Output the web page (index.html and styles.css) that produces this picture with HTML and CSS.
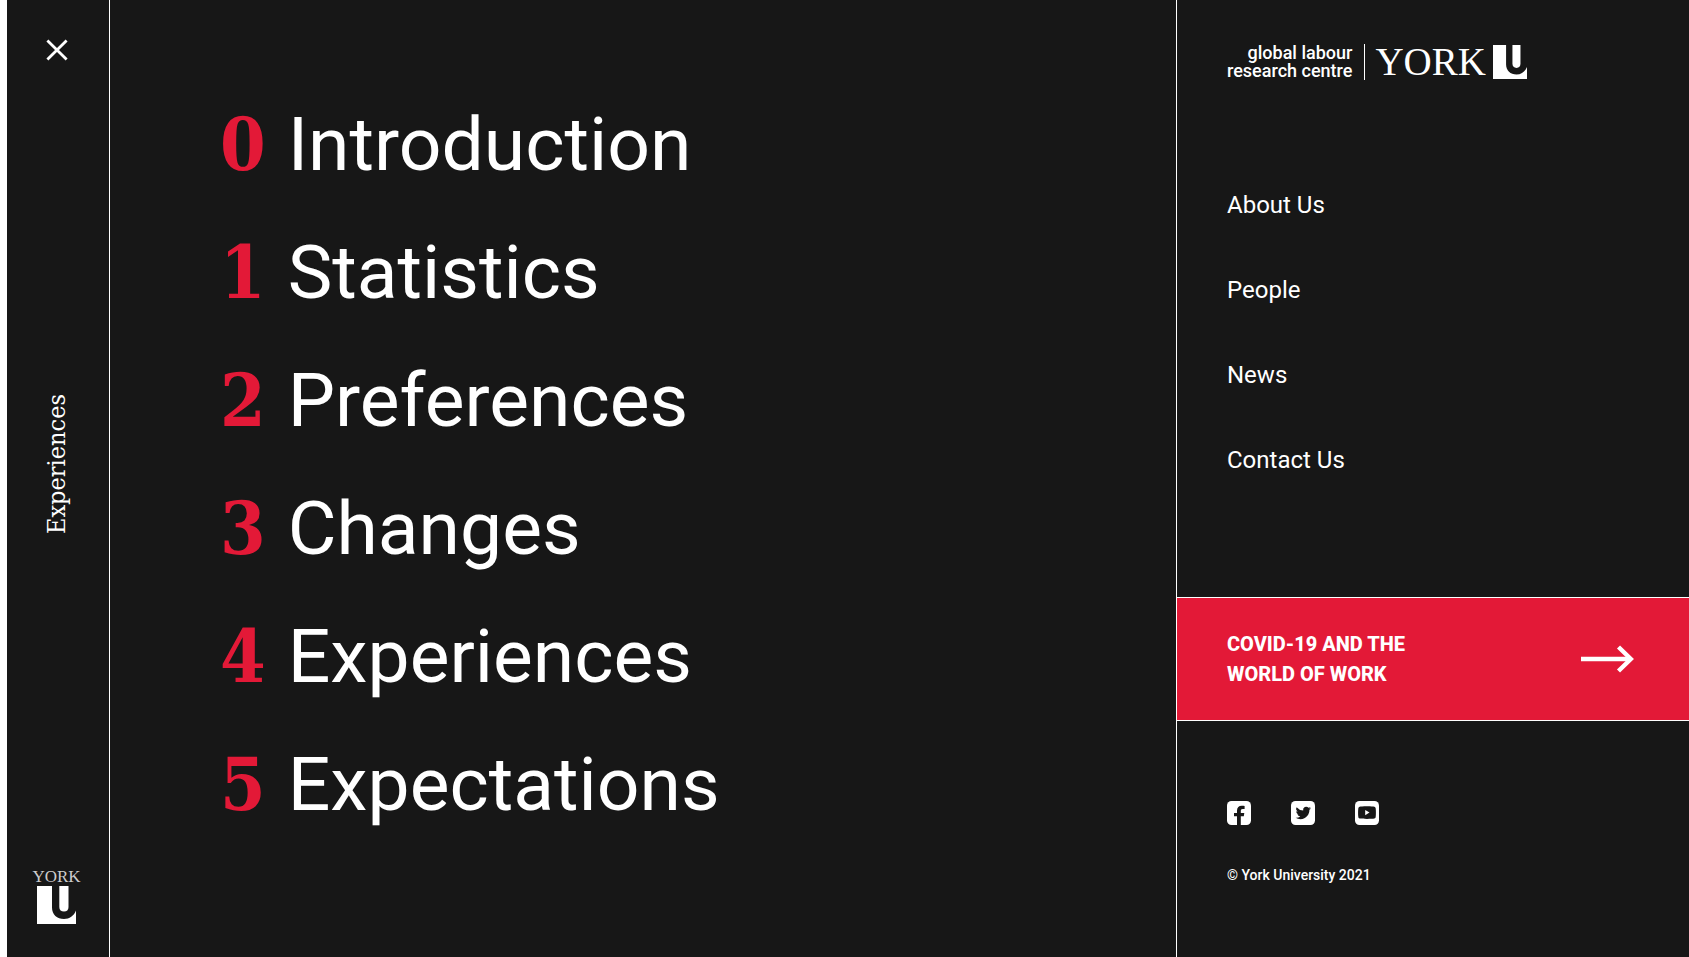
FILE: index.html
```html
<!DOCTYPE html>
<html lang="en">
<head>
<meta charset="utf-8">
<meta name="viewport" content="width=device-width, initial-scale=1">
<title>Global Labour Research Centre</title>
<link rel="stylesheet" href="styles.css">
</head>
<body>
<div class="page">
  <header class="rail">
    <button class="close" type="button" aria-label="Close menu">
      <svg width="22" height="22" viewBox="0 0 22 22" fill="none" stroke="currentColor" stroke-width="2.8"><path d="M1.4 1.4l19.2 19.2M20.6 1.4L1.4 20.6"/></svg>
    </button>
    <span class="section">Experiences</span>
    <a class="crest" href="#">
      <span class="crest-name">YORK</span>
      <svg width="39" height="38" viewBox="0 0 39 38" fill="currentColor" aria-hidden="true"><path d="M0 0H15V21.500C15 28.500 20 33 27 33C32.500 33 36.800 30 39 24.500V38H0Z"/><path d="M22.300 0H31.500V21C31.500 24 29.800 25.600 27 25.600C24.100 25.600 22.300 24 22.300 21Z"/></svg>
    </a>
  </header>

  <main class="chapters">
    <ol class="chapter-list">
      <li><a class="chapter" href="#"><span class="num">0</span><span>Introduction</span></a></li>
      <li><a class="chapter" href="#"><span class="num">1</span><span>Statistics</span></a></li>
      <li><a class="chapter" href="#"><span class="num">2</span><span>Preferences</span></a></li>
      <li><a class="chapter" href="#"><span class="num">3</span><span>Changes</span></a></li>
      <li><a class="chapter" href="#"><span class="num">4</span><span>Experiences</span></a></li>
      <li><a class="chapter" href="#"><span class="num">5</span><span>Expectations</span></a></li>
    </ol>
  </main>

  <aside class="side">
    <a class="brand" href="#">
      <span class="brand-centre">global labour<br>research centre</span>
      <span class="brand-york">YORK</span>
      <svg width="34" height="34" viewBox="0 0 39 38" preserveAspectRatio="none" fill="currentColor" aria-hidden="true"><path d="M0 0H15V21.500C15 28.500 20 33 27 33C32.500 33 36.800 30 39 24.500V38H0Z"/><path d="M22.300 0H31.500V21C31.500 24 29.800 25.600 27 25.600C24.100 25.600 22.300 24 22.300 21Z"/></svg>
    </a>
    <nav class="links">
      <a href="#">About Us</a>
      <a href="#">People</a>
      <a href="#">News</a>
      <a href="#">Contact Us</a>
    </nav>
    <a class="banner" href="#">
      <span>COVID-19 AND THE<br>WORLD OF WORK</span>
      <svg width="54" height="28" viewBox="0 0 54 28" fill="none" stroke="currentColor" stroke-width="4.400" aria-hidden="true"><path d="M0 14H50"/><path d="M37.500 2L49.800 14L37.500 26"/></svg>
    </a>
    <footer class="foot">
      <div class="social">
        <a href="#" aria-label="Facebook"><svg width="24" height="24" viewBox="0 0 24 24"><rect width="24" height="24" rx="4.500" fill="#fff"/><path d="M10 24V15.300H7V12H10V9.500C10 6.500 11.900 4.800 14.700 4.800C15.900 4.800 17 4.900 17.600 5V8H15.700C14.200 8 13.800 8.800 13.800 9.900V12H17.300L16.800 15.300H13.800V24Z" fill="#171717"/></svg></a>
        <a href="#" aria-label="Twitter"><svg width="24" height="24" viewBox="0 0 24 24"><rect width="24" height="24" rx="4.500" fill="#fff"/><path transform="translate(4.600 4.300) scale(.64)" d="M24 4.557a9.830 9.830 0 0 1-2.828.775 4.932 4.932 0 0 0 2.165-2.724 9.864 9.864 0 0 1-3.127 1.195 4.916 4.916 0 0 0-8.384 4.482A13.944 13.944 0 0 1 1.671 3.149a4.916 4.916 0 0 0 1.523 6.574 4.903 4.903 0 0 1-2.229-.616c-.054 2.281 1.581 4.415 3.949 4.890a4.935 4.935 0 0 1-2.224.084 4.928 4.928 0 0 0 4.600 3.419A9.900 9.900 0 0 1 0 19.540a13.940 13.940 0 0 0 7.548 2.212c9.142 0 14.307-7.721 13.995-14.646A10.025 10.025 0 0 0 24 4.557z" fill="#171717"/></svg></a>
        <a href="#" aria-label="YouTube"><svg width="24" height="24" viewBox="0 0 24 24"><rect width="24" height="24" rx="4.500" fill="#fff"/><path d="M12 5.300C16 5.300 18.500 5.500 19.300 5.700C20.300 6 20.600 6.700 20.700 7.500C21 10 21 13.500 20.700 15.800C20.600 16.700 20.200 17.400 19.300 17.600C17 18.100 7 18.100 4.700 17.600C3.800 17.400 3.400 16.700 3.300 15.800C3 13.500 3 10 3.300 7.500C3.400 6.700 3.700 6 4.700 5.700C5.500 5.500 8 5.300 12 5.300Z" fill="#171717"/><path d="M10.200 8.900L14.500 11.600L10.200 14.300Z" fill="#fff"/></svg></a>
      </div>
      <p class="copyright">© York University 2021</p>
    </footer>
  </aside>
</div>
</body>
</html>
```
FILE: styles.css
```css
* {
  box-sizing: border-box;
}

body {
  margin: 0;
  background: #fff;
  color: #fff;
  font-family: Roboto, "Liberation Sans", sans-serif;
}

a {
  color: inherit;
  text-decoration: none;
}

svg {
  display: block;
}

.page {
  display: grid;
  grid-template-columns: 103px 1fr 513px;
  min-height: 100vh;
  margin-left: 7px;
  background: #171717;
}

.rail {
  display: flex;
  flex-direction: column;
  align-items: center;
  justify-content: space-between;
  padding: 36px 3px 33px 0;
  border-right: 1px solid #fff;
}

.close {
  padding: 3px;
  border: 0;
  background: none;
  color: inherit;
  cursor: pointer;
}

.section {
  padding-top: 4px;
  font-family: "DejaVu Serif Condensed", "DejaVu Serif", serif;
  font-size: 25px;
  line-height: 32px;
  writing-mode: vertical-rl;
  transform: rotate(180deg);
}

.crest {
  display: flex;
  flex-direction: column;
  align-items: center;
}

.crest-name {
  color: #ccc;
  font-family: "Liberation Serif", serif;
  font-size: 17px;
  line-height: 18px;
}

.chapters {
  padding: 96px 32px 32px 110px;
}

.chapter-list {
  display: flex;
  flex-direction: column;
  gap: 32px;
  margin: 0;
  padding: 0;
  list-style: none;
}

.chapter {
  display: flex;
  align-items: baseline;
  gap: 22px;
  font-size: 75px;
  line-height: 96px;
}

.num {
  color: #e31937;
  font-family: "DejaVu Serif Condensed", "DejaVu Serif", serif;
  font-size: 73px;
  font-weight: 700;
  line-height: 72px;
}

.side {
  display: flex;
  flex-direction: column;
  border-left: 1px solid #fff;
}

.brand {
  display: flex;
  align-items: center;
  padding: 44px 50px 0;
}

.brand-centre {
  padding-right: 12px;
  border-right: 1px solid #fff;
  font-size: 18px;
  font-weight: 500;
  line-height: 18px;
  text-align: right;
}

.brand-york {
  padding: 0 7px 0 10px;
  font-family: "Liberation Serif", serif;
  font-size: 39px;
  line-height: 36px;
}

.links {
  display: flex;
  flex-direction: column;
  align-items: flex-start;
  gap: 53px;
  padding: 109px 50px 121px;
  font-size: 24px;
  line-height: 32px;
}

.banner {
  display: flex;
  align-items: center;
  justify-content: space-between;
  padding: 31px 54px 31px 50px;
  border-top: 1px solid #fff;
  border-bottom: 1px solid #fff;
  background: #e31937;
  font-size: 20px;
  font-weight: 800;
  line-height: 30px;
}

.foot {
  padding: 80px 50px 32px;
}

.social {
  display: flex;
  gap: 40px;
}

.copyright {
  margin: 40px 0 0;
  font-size: 14px;
  font-weight: 500;
  line-height: 20px;
}
```
